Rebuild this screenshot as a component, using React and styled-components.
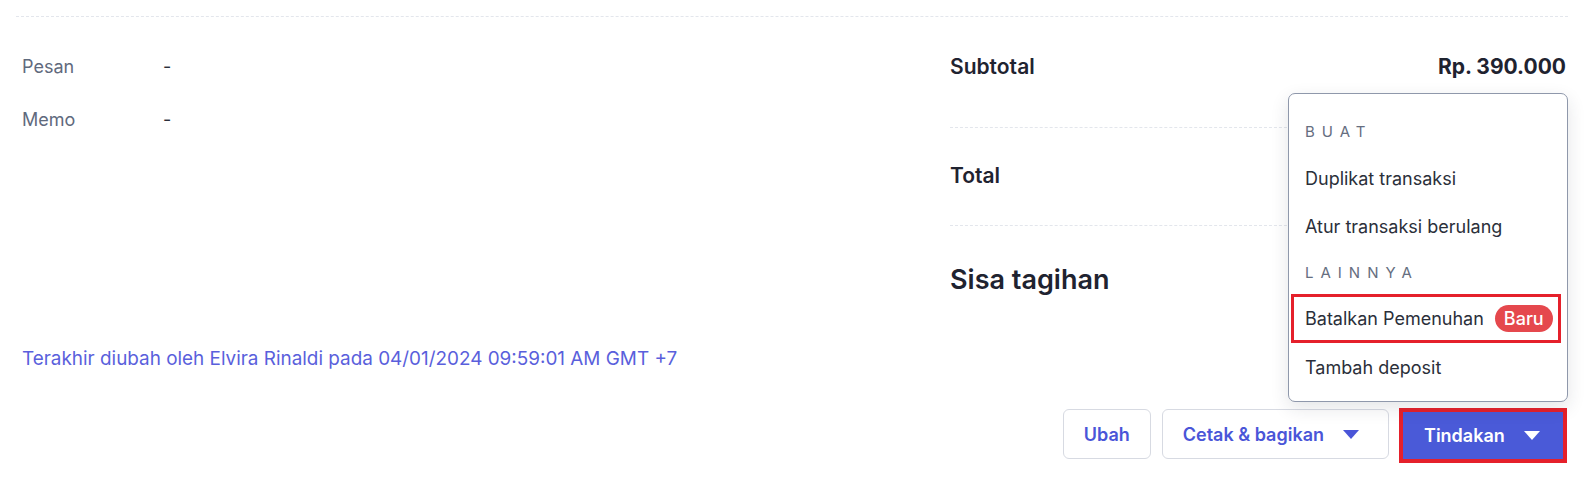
import React from 'react';
import styled, { createGlobalStyle } from 'styled-components';

const GlobalStyle = createGlobalStyle`
  body {
    margin: 0;
    background: #fff;
    font-family: Inter, "Noto Sans", sans-serif;
    color: #232733;
  }
`;

const Page = styled.div`
  width: 1586px;
  height: 483px;
  box-sizing: border-box;
  padding: 16px 18px 0 16px;
  overflow: hidden;
`;

const Divider = styled.div`
  border-top: 1px dashed #e3e6ec;
`;

const Body = styled.div`
  display: flex;
  align-items: flex-start;
`;

const InfoColumn = styled.div`
  flex: 1;
  padding: 23px 0 0 6px;
`;

const InfoRow = styled.div`
  display: flex;
  align-items: center;
  height: 53px;
  font-size: 18px;
`;

const InfoLabel = styled.span`
  width: 141px;
  color: #5f6a7d;
`;

const InfoValue = styled.span`
  color: #2b2f3a;
`;

const AuditNote = styled.p`
  margin: 201px 0 0;
  line-height: 24px;
  font-size: 18.9px;
  color: #5a5fdc;
`;

const Summary = styled.div`
  width: 616px;
  padding-top: 37px;
  margin-right: 2px;
`;

const SummaryRow = styled.div`
  display: flex;
  justify-content: space-between;
  align-items: center;
  line-height: ${p => (p.$big ? '32px' : '26px')};
  padding: ${p => p.$pad};
  border-bottom: ${p => (p.$last ? 'none' : '1px dashed #e3e6ec')};
  font-size: ${p => (p.$big ? '27px' : '21px')};
  font-weight: 600;
  color: #1f2330;
`;

const Amount = styled.span`
  font-weight: 700;
`;

const Actions = styled.div`
  display: flex;
  justify-content: flex-end;
  align-items: flex-end;
  gap: 11px;
  margin-top: 38px;
  padding-right: 5px;
`;

const OutlineButton = styled.button`
  display: flex;
  align-items: center;
  gap: 19px;
  height: 50px;
  padding: 0 ${p => (p.$caret ? '29px' : '20px')} 0 ${p => (p.$caret ? '20px' : '20px')};
  background: #fff;
  border: 1px solid #d7dae2;
  border-radius: 6px;
  font-family: inherit;
  font-size: 18px;
  font-weight: 600;
  color: #4a55d8;
  cursor: pointer;
`;

const MenuAnchor = styled.div`
  position: relative;
  margin-left: 3px;
`;

const PrimaryButton = styled.button`
  display: flex;
  align-items: center;
  gap: 19px;
  width: 160px;
  height: 47px;
  padding: 0 0 0 21px;
  background: #4a5ad8;
  border: none;
  outline: 4px solid #e5202b;
  font-family: inherit;
  font-size: 18px;
  font-weight: 600;
  color: #fff;
  cursor: pointer;
`;

const Menu = styled.div`
  position: absolute;
  right: -5px;
  bottom: calc(100% + 10px);
  width: 278px;
  padding: 14px 0 10px;
  background: #fff;
  border: 1px solid #8f98ab;
  border-radius: 7px;
  box-shadow: 0 6px 18px rgba(30, 40, 60, 0.12);
`;

const MenuHeading = styled.div`
  display: flex;
  align-items: center;
  height: ${p => p.$h}px;
  padding-left: 16px;
  font-size: 15px;
  letter-spacing: 7px;
  color: #666e80;
`;

const MenuItem = styled.div`
  display: flex;
  align-items: center;
  gap: 11px;
  height: ${p => p.$h || 48}px;
  padding-left: ${p => (p.$marked ? '14px' : '16px')};
  margin: ${p => (p.$marked ? '0 6px 0 2px' : '0')};
  outline: ${p => (p.$marked ? '3px solid #e5202b' : 'none')};
  outline-offset: -3px;
  font-size: 18px;
  color: #2b2f3a;
  cursor: pointer;
`;

const Badge = styled.span`
  display: inline-flex;
  align-items: center;
  height: 27px;
  padding: 0 9px;
  border-radius: 14px;
  background: #e5484d;
  font-size: 18px;
  font-weight: 500;
  color: #fff;
`;

const Caret = ({ color }) => (
  <svg width="16" height="9" viewBox="0 0 16 9">
    <path d="M0 0h16L8 9z" fill={color} />
  </svg>
);

export default function App() {
  return (
    <Page>
      <GlobalStyle />
      <Divider />
      <Body>
        <InfoColumn>
          <InfoRow>
            <InfoLabel>Pesan</InfoLabel>
            <InfoValue>-</InfoValue>
          </InfoRow>
          <InfoRow>
            <InfoLabel>Memo</InfoLabel>
            <InfoValue>-</InfoValue>
          </InfoRow>
          <AuditNote>Terakhir diubah oleh Elvira Rinaldi pada 04/01/2024 09:59:01 AM GMT +7</AuditNote>
        </InfoColumn>
        <Summary>
          <SummaryRow $pad="0 0 47px">
            <span>Subtotal</span>
            <Amount>Rp. 390.000</Amount>
          </SummaryRow>
          <SummaryRow $pad="35px 0 36px">
            <span>Total</span>
          </SummaryRow>
          <SummaryRow $big $last $pad="38px 0 0">
            <span>Sisa tagihan</span>
          </SummaryRow>
        </Summary>
      </Body>
      <Actions>
        <OutlineButton>Ubah</OutlineButton>
        <OutlineButton $caret>
          Cetak &amp; bagikan
          <Caret color="#4a55d8" />
        </OutlineButton>
        <MenuAnchor>
          <PrimaryButton>
            Tindakan
            <Caret color="#fff" />
          </PrimaryButton>
          <Menu>
            <MenuHeading $h={46}>BUAT</MenuHeading>
            <MenuItem>Duplikat transaksi</MenuItem>
            <MenuItem>Atur transaksi berulang</MenuItem>
            <MenuHeading $h={44}>LAINNYA</MenuHeading>
            <MenuItem $marked $h={49}>
              Batalkan Pemenuhan
              <Badge>Baru</Badge>
            </MenuItem>
            <MenuItem>Tambah deposit</MenuItem>
          </Menu>
        </MenuAnchor>
      </Actions>
    </Page>
  );
}
